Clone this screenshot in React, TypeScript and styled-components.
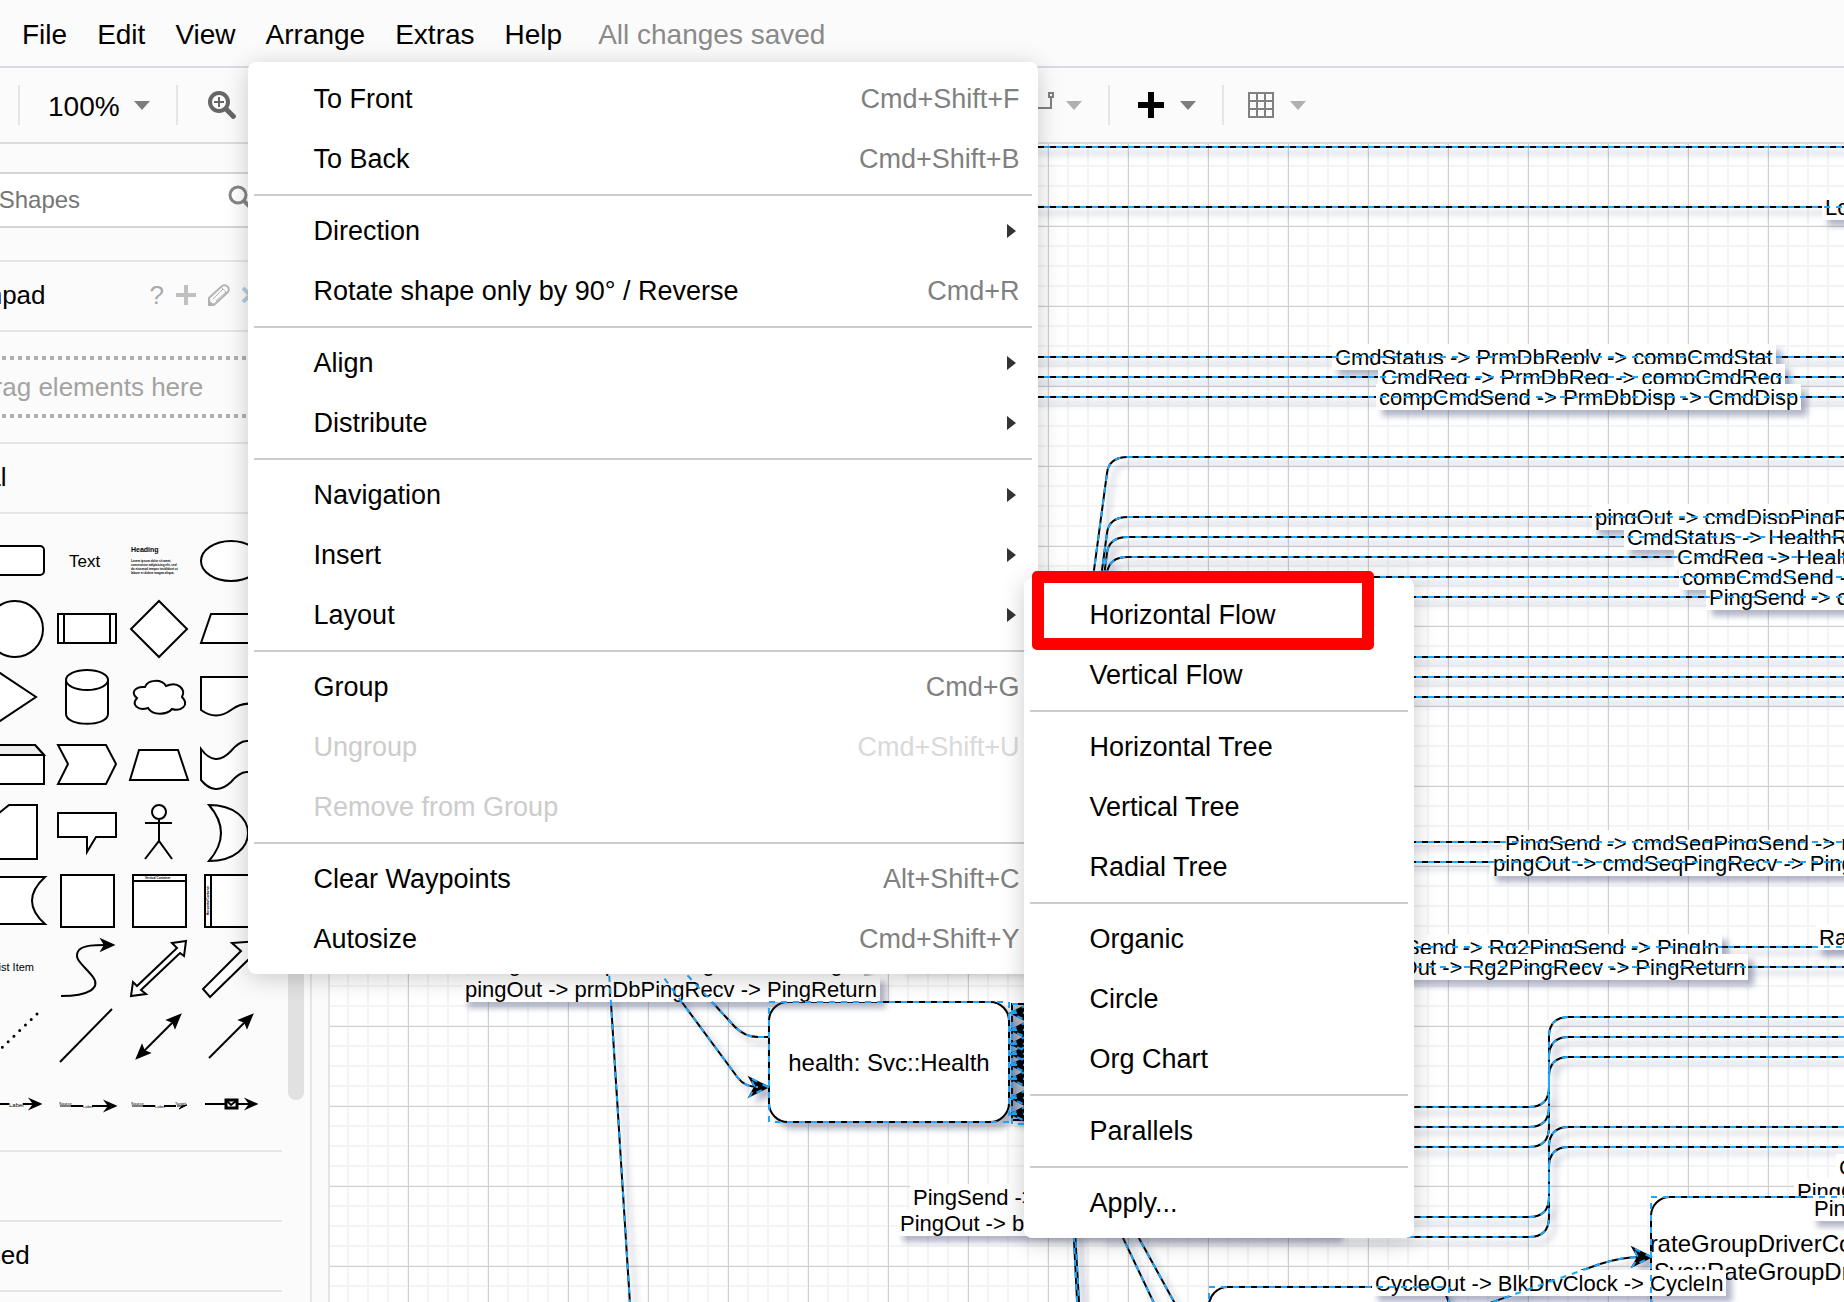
import React from "react";
import styled, { createGlobalStyle } from "styled-components";

const GlobalStyle = createGlobalStyle`
  * { box-sizing: border-box; }
  body {
    margin: 0;
    background: #ffffff;
    color: #000000;
    font-family: "Liberation Sans", Arial, sans-serif;
  }
  button, input { font: inherit; color: inherit; }
  ul { margin: 0; padding: 0; list-style: none; }
`;

const FONT = '"Liberation Sans", Arial, sans-serif';

const Page = styled.div`
  display: flex;
  flex-direction: column;
  height: 100vh;
  overflow: hidden;
`;

/* ---------- menu bar ---------- */

const MenuBar = styled.nav`
  position: relative;
  z-index: 2;
  display: flex;
  align-items: center;
  gap: 30px;
  flex: none;
  height: 68px;
  padding: 4px 22px 0;
  background: #fbfbfb;
  border-bottom: 2px solid #dadce5;
  font-size: 28px;
  line-height: 32px;
  white-space: nowrap;
`;

const MenuSlot = styled.div`
  position: relative;
`;

const MenuTitle = styled.button`
  display: block;
  padding: 0;
  border: 0;
  background: none;
`;

const Status = styled.span`
  padding-left: 6px;
  color: #8a8a8a;
`;

/* ---------- drop-down menus ---------- */

const Menu = styled.ul<{ $left: number; $top: number; $width: number }>`
  position: absolute;
  z-index: 3;
  left: ${(p) => p.$left}px;
  top: ${(p) => p.$top}px;
  width: ${(p) => p.$width}px;
  padding: 7px 0 5px;
  background: #ffffff;
  border-radius: 8px;
  box-shadow: 0 4px 24px rgba(0, 0, 0, 0.2);
  font-size: 27px;
  line-height: 32px;
`;

const MenuRow = styled.li`
  position: relative;
`;

const MenuItem = styled.button`
  display: flex;
  align-items: center;
  justify-content: space-between;
  width: 100%;
  height: 60px;
  padding: 0 18px 0 66px;
  border: 0;
  background: none;
  text-align: left;
  &:disabled { color: #cccccc; }
`;

const Shortcut = styled.span`
  color: #808080;
  ${MenuItem}:disabled & { color: #d9d9d9; }
`;

const SubArrow = styled.span`
  margin-right: 4px;
  border-left: 9px solid #333333;
  border-top: 7px solid transparent;
  border-bottom: 7px solid transparent;
`;

const Divider = styled.li`
  height: 2px;
  margin: 5px 6px;
  background: #cccccc;
`;

const Highlight = styled.span`
  position: absolute;
  left: 8px;
  top: -14px;
  width: 342px;
  height: 79px;
  border: 12px solid #ff0000;
  border-radius: 5px;
  pointer-events: none;
`;

/* ---------- toolbar ---------- */

const Toolbar = styled.div`
  display: flex;
  align-items: center;
  flex: none;
  height: 76px;
  padding-left: 18px;
  background: #fbfbfb;
  border-bottom: 2px solid #dadce5;
  font-size: 28px;
`;

const Rule = styled.span`
  flex: none;
  width: 2px;
  height: 40px;
  background: #e5e5e5;
`;

const ToolButton = styled.button<{ $width: number; $pad: number; $gap?: number }>`
  display: flex;
  align-items: center;
  flex: none;
  gap: ${(p) => p.$gap ?? 16}px;
  width: ${(p) => p.$width}px;
  padding: 0 0 0 ${(p) => p.$pad}px;
  border: 0;
  background: none;
`;

const ZoomValue = styled.span`
  padding-top: 4px;
`;

const Caret = styled.span<{ $dim?: boolean }>`
  border-top: 9px solid ${(p) => (p.$dim ? "#b0b0b0" : "#7d7d7d")};
  border-left: 8px solid transparent;
  border-right: 8px solid transparent;
`;

/* ---------- body ---------- */

const Body = styled.div`
  display: flex;
  flex: 1;
  min-height: 0;
`;

const Sidebar = styled.aside`
  display: flex;
  flex: none;
  width: 312px;
  overflow: hidden;
  background: #fbfbfb;
  border-right: 2px solid #e5e5e5;
`;

const SideContent = styled.div`
  flex: none;
  width: 378px;
  margin-left: -96px;
  font-size: 26px;
  line-height: 30px;
`;

const ScrollThumb = styled.div`
  width: 16px;
  height: 400px;
  margin: 556px 0 0 6px;
  border-radius: 8px;
  background: #e1e1e1;
`;

const Splitter = styled.div`
  flex: none;
  width: 18px;
  background: #fbfbfb;
  border-right: 2px solid #e5e5e5;
`;

const SearchBox = styled.label`
  display: flex;
  align-items: center;
  height: 56px;
  margin: 28px 20px 32px 0;
  padding: 0 2px 0 12px;
  background: #ffffff;
  border: 2px solid #d5d5d5;
  border-left: 0;
  font-size: 24px;
`;

const SearchInput = styled.input`
  flex: 1;
  min-width: 0;
  padding: 0;
  border: 0;
  outline: 0;
  background: none;
  &::placeholder { color: #757575; opacity: 1; }
`;

const Heading = styled.div<{ $stacked?: boolean }>`
  display: flex;
  align-items: center;
  justify-content: space-between;
  height: 72px;
  margin-top: ${(p) => (p.$stacked ? -2 : 0)}px;
  padding: 0 24px 2px 10px;
  border-top: 2px solid #e5e5e5;
  border-bottom: 2px solid #e5e5e5;
`;

const Actions = styled.div`
  display: flex;
  align-items: center;
  gap: 12px;
`;

const IconButton = styled.button`
  display: flex;
  padding: 0;
  border: 0;
  background: none;
  color: #aaaaaa;
`;

const DropZone = styled.div`
  display: flex;
  align-items: center;
  justify-content: center;
  width: 318px;
  height: 62px;
  margin: 24px 0 24px 26px;
  color: #a3a3a3;
  background:
    repeating-linear-gradient(90deg, #b0b0b0 0 4px, transparent 4px 8px) top / 100% 4px no-repeat,
    repeating-linear-gradient(90deg, #b0b0b0 0 4px, transparent 4px 8px) bottom / 100% 4px no-repeat;
`;

const Palette = styled.div`
  display: grid;
  grid-template-columns: repeat(4, 72px);
  grid-auto-rows: 68px;
  padding: 12px 0 12px 75px;
`;

const Cell = styled.svg`
  display: block;
  width: 72px;
  height: 68px;
  overflow: visible;
  fill: #ffffff;
  stroke: #000000;
  stroke-width: 2;
  text {
    fill: #000000;
    stroke: none;
    font-family: ${FONT};
  }
  .open { fill: none; }
  .solid { fill: #000000; }
`;

/* ---------- diagram ---------- */

const Canvas = styled.main`
  position: relative;
  flex: 1;
  min-width: 0;
  overflow: hidden;
  background:
    repeating-linear-gradient(90deg, #cfcfcf 0 1px, transparent 1px 80px) 78px 0,
    repeating-linear-gradient(180deg, #cfcfcf 0 1px, transparent 1px 80px) 0 2px,
    repeating-linear-gradient(90deg, #f4f4f4 0 2px, transparent 2px 20px) 77px 0,
    repeating-linear-gradient(180deg, #f4f4f4 0 2px, transparent 2px 20px) 0 1px,
    #ffffff;
  background-size: 80px 80px, 80px 80px, 20px 20px, 20px 20px, auto;
`;

/* The drawing is scrolled so that its origin is up and to the left of the view. */
const Drawing = styled.div`
  position: absolute;
  left: -330px;
  top: -144px;
  width: 2600px;
  height: 1800px;
`;

const Layer = styled.svg`
  position: absolute;
  inset: 0;
  width: 100%;
  height: 100%;
  fill: none;
  stroke-width: 2;
`;

const EdgeGroup = styled.g`
  stroke: #000000;
  filter: drop-shadow(6px 6px 3px rgba(61, 69, 116, 0.4));
  .head { fill: #000000; }
`;

const SelectionGroup = styled.g`
  stroke: #1ea7fd;
  stroke-dasharray: 6 6;
`;

const EdgeLabel = styled.span<{ $x: number; $y: number }>`
  position: absolute;
  left: ${(p) => p.$x}px;
  top: ${(p) => p.$y}px;
  padding: 2px 3px 0;
  background: #ffffff;
  box-shadow: 6px 6px 6px rgba(61, 69, 116, 0.4);
  font-size: 22px;
  line-height: 24px;
  white-space: nowrap;
`;

const Node = styled.div<{ $x: number; $y: number }>`
  position: absolute;
  left: ${(p) => p.$x}px;
  top: ${(p) => p.$y}px;
  display: flex;
  align-items: center;
  justify-content: center;
  width: 242px;
  height: 122px;
  padding-top: 2px;
  border: 2px solid #000000;
  border-radius: 20px;
  background: #ffffff;
  box-shadow: 6px 6px 6px rgba(61, 69, 116, 0.4);
  font-size: 24px;
  line-height: 28px;
  text-align: center;
  white-space: nowrap;
`;

/* ---------- data ---------- */

type Entry = {
  label: string;
  keys?: string;
  disabled?: boolean;
  sub?: Entry[][];
  marked?: boolean;
};

const layoutMenu: Entry[][] = [
  [{ label: "Horizontal Flow", marked: true }, { label: "Vertical Flow" }],
  [{ label: "Horizontal Tree" }, { label: "Vertical Tree" }, { label: "Radial Tree" }],
  [{ label: "Organic" }, { label: "Circle" }, { label: "Org Chart" }],
  [{ label: "Parallels" }],
  [{ label: "Apply..." }],
];

const arrangeMenu: Entry[][] = [
  [
    { label: "To Front", keys: "Cmd+Shift+F" },
    { label: "To Back", keys: "Cmd+Shift+B" },
  ],
  [
    { label: "Direction", sub: [] },
    { label: "Rotate shape only by 90° / Reverse", keys: "Cmd+R" },
  ],
  [
    { label: "Align", sub: [] },
    { label: "Distribute", sub: [] },
  ],
  [
    { label: "Navigation", sub: [] },
    { label: "Insert", sub: [] },
    { label: "Layout", sub: layoutMenu },
  ],
  [
    { label: "Group", keys: "Cmd+G" },
    { label: "Ungroup", keys: "Cmd+Shift+U", disabled: true },
    { label: "Remove from Group", disabled: true },
  ],
  [
    { label: "Clear Waypoints", keys: "Alt+Shift+C" },
    { label: "Autosize", keys: "Cmd+Shift+Y" },
  ],
];

const bend = (y1: number, y2: number) =>
  `M2600 ${y1}H1569Q1549 ${y1} 1549 ${y1 + 20}V${y2 - 20}Q1549 ${y2} 1529 ${y2}H1100`;

const head = (x: number, y: number, dir: number) =>
  `M${x} ${y}L${x - 18 * dir} ${y - 9}L${x - 13 * dir} ${y}L${x - 18 * dir} ${y + 9}Z`;

const straight = [147, 207, 357, 377, 397, 577, 597, 657, 677, 697, 842, 862, 947, 967];

const edges = [
  ...straight.map((y) => `M900 ${y}H2600`),
  "M1090 600L1107 473Q1109 457 1128 457H2600",
  "M1098 600L1107 533Q1109 517 1128 517H2600",
  "M1101 600L1107 553Q1109 537 1128 537H2600",
  "M1104 600L1107 573Q1109 557 1128 557H2600",
  bend(1017, 1107),
  bend(1037, 1127),
  bend(1057, 1147),
  bend(1127, 1217),
  bend(1147, 1237),
  "M607 940L631 1320",
  "M636 940L738 1078Q745 1087 758 1087",
  "M655 940L713 1003L735 1027Q745 1037 758 1037H769",
  "M1072 1200L1078 1320",
  "M1073 1194L1080 1320",
  "M1105 1200L1162 1320",
  "M1118 1200L1184 1320",
  "M1470 1310L1600 1264Q1622 1257 1640 1257",
];

const inbound = [1013, 1030, 1044, 1054, 1065, 1079, 1098, 1114];

const heads = [
  head(768, 1087, 1),
  head(1651, 1257, 1),
  ...inbound.map((y) => head(1011, y, -1) + `M1011 ${y}H1040`),
];

const frames: [number, number][] = [
  [769, 1002],
  [1651, 1197],
  [1209, 1287],
  [1012, 1004],
];

type Label = [number, number, string];

const labels: Label[] = [
  [1822, 194, "LogText"],
  [1332, 344, "CmdStatus -> PrmDbReply -> compCmdStat"],
  [1378, 364, "CmdReg -> PrmDbReg -> compCmdReg"],
  [1376, 384, "compCmdSend -> PrmDbDisp -> CmdDisp"],
  [1592, 504, "pingOut -> cmdDispPingRecv"],
  [1624, 524, "CmdStatus -> HealthReply"],
  [1674, 544, "CmdReg -> HealthReg"],
  [1679, 564, "compCmdSend -> HealthDisp"],
  [1706, 584, "PingSend -> cmdDispPingSend"],
  [1502, 830, "PingSend -> cmdSeqPingSend -> pingIn"],
  [1490, 850, "pingOut -> cmdSeqPingRecv -> PingReturn"],
  [1358, 934, "PingSend -> Rg2PingSend -> PingIn"],
  [1356, 954, "pingOut -> Rg2PingRecv -> PingReturn"],
  [1816, 924, "RateGroup"],
  [474, 950, "PingSend -> prmDbPingSend -> PingIn"],
  [910, 1184, "PingSend -> blockDrvPingSend -> PingIn"],
  [897, 1210, "PingOut -> blockDrvPingRecv -> PingReturn"],
  [1836, 1154, "CycleOut"],
  [1794, 1178, "PingOut"],
];

const topLabels: Label[] = [
  [1811, 1195, "PingIn"],
  [462, 976, "pingOut -> prmDbPingRecv -> PingReturn"],
  [1372, 1270, "CycleOut -> BlkDrvClock -> CycleIn"],
];

const arrowNE = (x: number, y: number) => `M${x} ${y}l-5 12l-2 -5l-5 -2Z`;
const arrowSW = (x: number, y: number) => `M${x} ${y}l5 -12l2 5l5 2Z`;
const arrowE = (x: number, y: number) => `M${x} ${y}l-9 -4l3 4l-3 4Z`;

const shapes: React.ReactNode[] = [
  <rect x="7" y="20" width="58" height="29" rx="4" />,
  <text x="18" y="41" fontSize="17">Text</text>,
  <>
    <text x="8" y="26" fontSize="7" fontWeight="bold">Heading</text>
    {[
      "Lorem ipsum dolor sit amet,",
      "consectetur adipisicing elit, sed",
      "do eiusmod tempor incididunt ut",
      "labore et dolore magna aliqua.",
    ].map((t, i) => (
      <text key={t} x="8" y={36 + i * 4} fontSize="3" fontWeight="bold">{t}</text>
    ))}
  </>,
  <ellipse cx="36" cy="35" rx="30" ry="20" />,

  <circle cx="36" cy="35" r="28" />,
  <>
    <rect x="7" y="20" width="58" height="29" />
    <path className="open" d="M13 20V49M59 20V49" />
  </>,
  <path d="M36 7L64 35L36 63L8 35Z" />,
  <path d="M6 49L16 20H66L56 49Z" />,

  <path d="M15 7L57 35L15 63Z" />,
  <>
    <path d="M15 18V52C15 65 57 65 57 52V18" />
    <ellipse cx="36" cy="18" rx="21" ry="10" />
  </>,
  <path d="M22 25C12 24 7 31 14 36C8 43 15 49 25 46C30 54 44 53 49 47C58 50 67 43 59 35C63 27 55 19 43 24C39 17 25 17 22 25Z" />,
  <path d="M6 15H66V45Q51 37 36 48Q21 59 6 48Z" />,

  <>
    <path d="M7 15H56L65 25V54H7Z" />
    <path d="M7 15H56L65 25H7Z" fill="#eeeeee" />
  </>,
  <path d="M7 15H55L65 34L55 54H7L17 34Z" />,
  <path d="M16 20H55L65 50H7Z" />,
  <path d="M6 19Q20 38 36 21Q52 2 66 19V50Q52 33 36 52Q20 67 6 50Z" />,

  <path d="M30 7H58V61H14V20Z" />,
  <path d="M7 15H65V39H45L36 54V39H7Z" />,
  <>
    <circle cx="36" cy="14" r="7" />
    <path className="open" d="M36 21V43M22 25H49M22 61L36 43L49 61" />
  </>,
  <path d="M14 7C66 7 66 63 14 63Q38 35 14 7Z" />,

  <path d="M7 11H66Q40 35 66 58H7Z" />,
  <rect x="10" y="9" width="53" height="52" />,
  <>
    <rect x="10" y="9" width="53" height="52" />
    <path d="M10 15H63" />
    <text x="22" y="13" fontSize="3" fontWeight="bold">Vertical Container</text>
  </>,
  <>
    <rect x="10" y="9" width="53" height="52" />
    <path d="M16 9V61" />
    <text transform="translate(14 49) rotate(-90)" fontSize="3" fontWeight="bold">Horizontal Container</text>
  </>,

  <text x="55" y="37" fontSize="11" textAnchor="end">List Item</text>,
  <>
    <path className="open" d="M10 62C38 62 50 54 42 43C33 31 21 25 28 16C33 11 44 11 54 11" />
    <path className="solid" d="M62 11l-11 -5l3 5l-3 5Z" />
  </>,
  <path d="M63 7L49 9L54 14L14 52L10 48L8 62L23 60L18 56L57 19L61 22Z" />,
  <path d="M65 7L37 9L46 17L8 55L15 63L54 25L62 33Z" />,

  <path d="M58 12L8 60" strokeDasharray="0 8" strokeLinecap="round" strokeWidth="3" />,
  <path d="M9 60L61 7" />,
  <>
    <path d="M19 51L52 18" />
    <path className="solid" d={arrowNE(57, 13)} />
    <path className="solid" d={arrowSW(14, 56)} />
  </>,
  <>
    <path d="M14 56L52 18" />
    <path className="solid" d={arrowNE(57, 13)} />
  </>,

  <>
    <path d="M8 34H30M44 34H56" />
    <path className="solid" d={arrowE(61, 34)} />
    <text x="30" y="37" fontSize="6">Label</text>
  </>,
  <>
    <path d="M9 36H20" strokeWidth="1" />
    <path d="M20 36H32M41 36H58" />
    <path className="solid" d={arrowE(64, 36)} />
    <text x="8" y="35" fontSize="4">Source</text>
    <text x="32" y="38" fontSize="4">Label</text>
  </>,
  <>
    <path d="M9 36H20M54 36H60" strokeWidth="1" />
    <path d="M20 36H32M41 36H53" />
    <path className="solid" strokeWidth="1" d="M64 35l-8 4l3 -3Z" />
    <text x="8" y="35" fontSize="4">Source</text>
    <text x="32" y="38" fontSize="4">Label</text>
    <text x="52" y="35" fontSize="4">Target</text>
  </>,
  <>
    <path d="M10 34H56" />
    <path className="solid" d={arrowE(61, 34)} />
    <rect x="31" y="30" width="11" height="8" strokeWidth="3" />
    <path className="open" d="M32 31L36 35L41 31" />
  </>,
];

/* ---------- components ---------- */

function MenuList({ groups, left, top, width }: { groups: Entry[][]; left: number; top: number; width: number }) {
  return (
    <Menu $left={left} $top={top} $width={width}>
      {groups.map((group, g) => (
        <React.Fragment key={g}>
          {g > 0 && <Divider role="separator" />}
          {group.map((item) => (
            <MenuRow key={item.label}>
              <MenuItem type="button" disabled={item.disabled}>
                {item.label}
                {item.keys && <Shortcut>{item.keys}</Shortcut>}
                {item.sub && <SubArrow />}
              </MenuItem>
              {item.marked && <Highlight />}
              {item.sub && item.sub.length > 0 && (
                <MenuList groups={item.sub} left={776} top={-7} width={390} />
              )}
            </MenuRow>
          ))}
        </React.Fragment>
      ))}
    </Menu>
  );
}

function Tools() {
  return (
    <Toolbar>
      <Rule />
      <ToolButton type="button" $width={156} $pad={28} $gap={14}>
        <ZoomValue>100%</ZoomValue>
        <Caret />
      </ToolButton>
      <Rule />
      <ToolButton type="button" aria-label="Zoom in" $width={848} $pad={30}>
        <svg width="28" height="28" viewBox="0 0 28 28" fill="none" stroke="#666666">
          <circle cx="11" cy="11" r="9" strokeWidth="4" />
          <path d="M17 17L27 27" strokeWidth="5" />
          <path d="M6 11H16M11 6V16" strokeWidth="2" />
        </svg>
      </ToolButton>
      <ToolButton type="button" aria-label="Waypoints" $width={82} $pad={0} $gap={12}>
        <svg width="28" height="28" viewBox="0 0 28 28" fill="none" stroke="#808080" strokeWidth="2">
          <path d="M0 17H25V6" />
          <rect x="23" y="2" width="4" height="4" />
        </svg>
        <Caret $dim />
      </ToolButton>
      <Rule />
      <ToolButton type="button" aria-label="Insert" $width={112} $pad={28}>
        <svg width="26" height="26" viewBox="0 0 26 26" stroke="#000000" strokeWidth="6">
          <path d="M0 13H26M13 0V26" />
        </svg>
        <Caret />
      </ToolButton>
      <Rule />
      <ToolButton type="button" aria-label="Table" $width={112} $pad={24}>
        <svg width="26" height="26" viewBox="0 0 26 26" fill="none" stroke="#808080" strokeWidth="2">
          <rect x="1" y="1" width="24" height="24" />
          <path d="M9 1V25M17 1V25M1 9H25M1 17H25" />
        </svg>
        <Caret $dim />
      </ToolButton>
    </Toolbar>
  );
}

function ShapePanel() {
  return (
    <Sidebar>
      <SideContent>
        <SearchBox>
          <SearchInput type="text" placeholder="Search Shapes" aria-label="Search Shapes" />
          <svg width="30" height="30" viewBox="0 0 30 30" fill="none" stroke="#858585">
            <circle cx="10" cy="10" r="8" strokeWidth="3" />
            <path d="M16 16L24 24" strokeWidth="4" />
          </svg>
        </SearchBox>
        <Heading>
          Scratchpad
          <Actions>
            <IconButton type="button">?</IconButton>
            <IconButton type="button" aria-label="Add">
              <svg width="20" height="20" viewBox="0 0 20 20" stroke="#c0c0c0" strokeWidth="4">
                <path d="M0 10H20M10 0V20" />
              </svg>
            </IconButton>
            <IconButton type="button" aria-label="Edit">
              <svg width="22" height="22" viewBox="0 0 22 22" fill="none" stroke="#b5b5b5" strokeWidth="2">
                <path d="M1 21V14L14 2Q17 0 20 3Q22 6 19 9L7 20Z" />
                <path d="M5 15L15 5M8 17L18 8M13 3L19 9" strokeWidth="1" />
                <path d="M0 22V15L7 22Z" fill="#b0b0b0" stroke="none" />
              </svg>
            </IconButton>
            <IconButton type="button" aria-label="Close">
              <svg width="16" height="16" viewBox="0 0 16 16" stroke="#b9cbe0" strokeWidth="4">
                <path d="M1 1L15 15M15 1L1 15" />
              </svg>
            </IconButton>
          </Actions>
        </Heading>
        <DropZone>Drag elements here</DropZone>
        <Heading>General</Heading>
        <Palette>
          {shapes.map((shape, i) => (
            <Cell key={i} viewBox="0 0 72 68">{shape}</Cell>
          ))}
        </Palette>
        <Heading>Misc</Heading>
        <Heading $stacked>Advanced</Heading>
      </SideContent>
      <ScrollThumb />
    </Sidebar>
  );
}

function Diagram() {
  return (
    <Canvas>
      <Drawing>
        <Layer>
          <EdgeGroup>
            <rect x="1012" y="1004" width="28" height="116" fill="#b9bccb" />
            {edges.map((d) => <path key={d} d={d} />)}
            {heads.map((d) => <path key={d} className="head" d={d} />)}
          </EdgeGroup>
        </Layer>
        {labels.map(([x, y, text]) => (
          <EdgeLabel key={text + x} $x={x} $y={y}>{text}</EdgeLabel>
        ))}
        <Node $x={768} $y={1001}>health: Svc::Health</Node>
        <Node $x={1650} $y={1196}>rateGroupDriverComp:<br />Svc::RateGroupDriver</Node>
        <Node $x={1208} $y={1286} />
        {topLabels.map(([x, y, text]) => (
          <EdgeLabel key={text} $x={x} $y={y}>{text}</EdgeLabel>
        ))}
        <Layer>
          <SelectionGroup>
            {edges.map((d) => <path key={d} d={d} />)}
            {heads.map((d) => <path key={d} d={d} />)}
            {frames.map(([x, y]) => (
              <rect key={x} x={x} y={y} width="240" height="120" />
            ))}
          </SelectionGroup>
        </Layer>
      </Drawing>
    </Canvas>
  );
}

export default function App() {
  return (
    <Page>
      <GlobalStyle />
      <MenuBar>
        {["File", "Edit", "View", "Arrange", "Extras", "Help"].map((name) => (
          <MenuSlot key={name}>
            <MenuTitle type="button">{name}</MenuTitle>
            {name === "Arrange" && <MenuList groups={arrangeMenu} left={-18} top={43} width={790} />}
          </MenuSlot>
        ))}
        <Status>All changes saved</Status>
      </MenuBar>
      <Tools />
      <Body>
        <ShapePanel />
        <Splitter />
        <Diagram />
      </Body>
    </Page>
  );
}
